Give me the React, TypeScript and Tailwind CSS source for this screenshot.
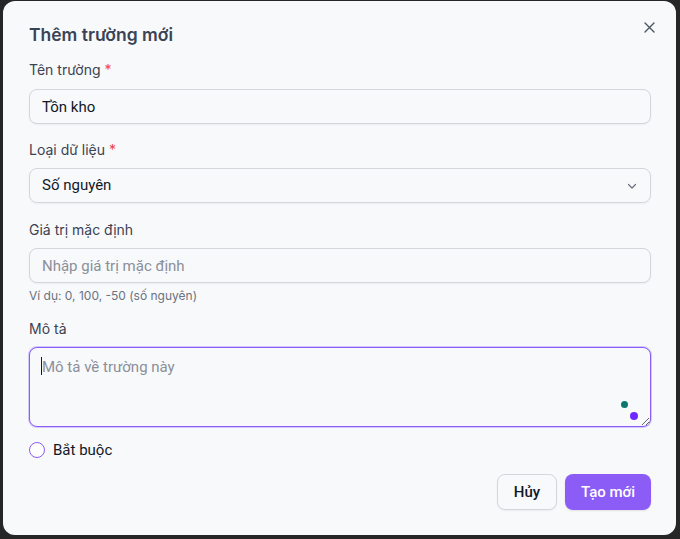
import { useState } from "react";

const inter = "font-['Inter',sans-serif]";
const roboto = "font-['Roboto',sans-serif]";

function Label({ text, required }: { text: string; required?: boolean }) {
    return (
        <div className={`h-[20px] text-[14px] leading-[20px] text-[#3b4252] ${inter}`}>
            {text}
            {required && <span className="text-[#ef4444] ml-1">*</span>}
        </div>
    );
}

export default function App() {
    const [name, setName] = useState("Tồn kho");
    const [required, setRequired] = useState(false);

    return (
        <div className="w-[680px] h-[539px] bg-[#262626] pt-[1px] pl-[3px]">
            <div className="relative w-[673px] h-[534px] bg-[#f8f9fb] rounded-[12px] pt-[20px] pl-[26px] pr-[25px]">
                <button className="absolute top-[19px] right-[20px] w-[14px] h-[14px] flex items-center justify-center text-[#4b5563]">
                    <svg width="11" height="11" viewBox="0 0 11 11" fill="none" stroke="currentColor" strokeWidth="1.4" strokeLinecap="round">
                        <path d="M1 1l9 9M10 1l-9 9" />
                    </svg>
                </button>

                <h2 className={`h-[28px] text-[17.5px] leading-[28px] font-semibold text-[#3a4356] ${inter}`}>Thêm trường mới</h2>

                <div className="mt-[11px]">
                    <Label text="Tên trường" required />
                    <input
                        value={name}
                        onChange={(e) => setName(e.target.value)}
                        className={`mt-[9px] w-full h-[35px] rounded-[8px] border border-[#d4d6dc] bg-[#f8f9fb] px-[12px] text-[15px] text-[#111827] shadow-[0_1px_2px_rgba(0,0,0,0.05)] outline-none ${roboto}`}
                    />
                </div>

                <div className="mt-[16px]">
                    <Label text="Loại dữ liệu" required />
                    <div className={`mt-[8px] w-full h-[35px] rounded-[8px] border border-[#d4d6dc] px-[12px] flex items-center justify-between text-[15px] text-[#111827] shadow-[0_1px_2px_rgba(0,0,0,0.05)] ${roboto}`}>
                        <span>Số nguyên</span>
                        <svg width="12" height="12" viewBox="0 0 12 12" fill="none" stroke="#6b7280" strokeWidth="1.2" strokeLinecap="round" strokeLinejoin="round">
                            <path d="M2.5 4.5L6 8l3.5-3.5" />
                        </svg>
                    </div>
                </div>

                <div className="mt-[17px]">
                    <Label text="Giá trị mặc định" />
                    <input
                        placeholder="Nhập giá trị mặc định"
                        className={`mt-[8px] w-full h-[35px] rounded-[8px] border border-[#d4d6dc] bg-[#f8f9fb] px-[12px] text-[15px] text-[#111827] placeholder:text-[#8a8f99] shadow-[0_1px_2px_rgba(0,0,0,0.05)] outline-none ${roboto}`}
                    />
                    <div className={`mt-[5px] h-[16px] text-[12px] leading-[16px] text-[#6b7280] ${inter}`}>Ví dụ: 0, 100, -50 (số nguyên)</div>
                </div>

                <div className="mt-[15px]">
                    <Label text="Mô tả" />
                    <div className="relative mt-[8px]">
                        <textarea
                            placeholder="Mô tả về trường này"
                            className={`block w-full h-[80px] rounded-[8px] border border-[#8b5cf6] bg-[#f8f9fb] px-[12px] py-[8px] text-[15px] leading-[22px] text-[#111827] placeholder:text-[#8a8f99] shadow-[0_0_0_1px_rgba(167,139,250,0.45)] outline-none ${roboto}`}
                        />
                        <span className="absolute left-[12px] top-[10px] w-px h-[18px] bg-[#111827]" />
                        <span className="absolute right-[23px] bottom-[19px] w-[7px] h-[7px] rounded-full bg-[#0f766e]" />
                        <span className="absolute right-[13px] bottom-[7px] w-[8px] h-[8px] rounded-full bg-[#6d28ff]" />
                    </div>
                </div>

                <label className="mt-[13px] h-[20px] flex items-center gap-[8px] cursor-pointer">
                    <button
                        onClick={() => setRequired(!required)}
                        className={`w-[16px] h-[16px] rounded-full border-[1.5px] border-[#8b5cf6] ${required ? "bg-[#8b5cf6]" : "bg-white"}`}
                    />
                    <span className={`text-[15px] text-[#111827] ${roboto}`}>Bắt buộc</span>
                </label>

                <div className="mt-[14px] flex justify-end gap-[8px]">
                    <button className={`w-[60px] h-[36px] rounded-[8px] border border-[#d4d6dc] bg-[#f8f9fb] text-[15px] font-medium text-[#111827] shadow-[0_1px_2px_rgba(0,0,0,0.05)] ${roboto}`}>
                        Hủy
                    </button>
                    <button className={`w-[86px] h-[36px] rounded-[8px] bg-[#8b5cf6] text-[15px] font-medium text-white shadow-[0_1px_2px_rgba(0,0,0,0.1)] ${roboto}`}>
                        Tạo mới
                    </button>
                </div>
            </div>
        </div>
    );
}
